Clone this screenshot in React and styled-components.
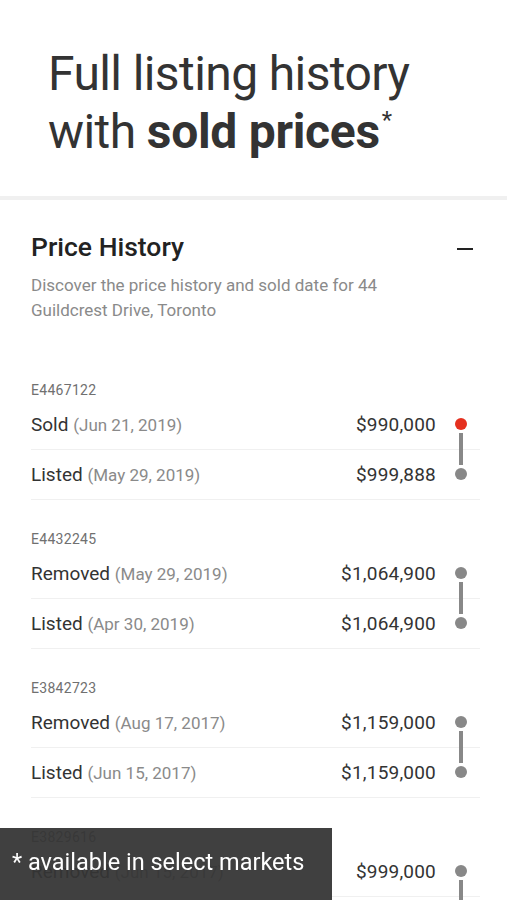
import React from "react";
import styled, { createGlobalStyle } from "styled-components";

const Global = createGlobalStyle`
  html, body { margin: 0; padding: 0; background: #fff; overflow: hidden; }
  body { font-family: Roboto, "Noto Sans", "Liberation Sans", sans-serif; color: #333; }
  * { box-sizing: border-box; }
`;

const Page = styled.div`
  width: 507px;
  height: 900px;
  overflow: hidden;
  position: relative;
`;

const Hero = styled.header`
  padding: 45px 20px 35px 48px;
  border-bottom: 4px solid #f0f0f0;
`;

const Headline = styled.h1`
  margin: 0;
  font-size: 48px;
  line-height: 58px;
  font-weight: 400;
  color: #333;
  letter-spacing: -0.6px;
  strong { font-weight: 700; letter-spacing: -0.3px; }
  sup { font-size: 24px; vertical-align: 20px; line-height: 0; margin-left: 2px; font-weight: 400; }
`;

const Section = styled.section`
  padding: 31px 27px 0 31px;
`;

const HeaderRow = styled.div`
  display: flex;
  align-items: center;
  justify-content: space-between;
`;

const Title = styled.h2`
  margin: 0;
  font-size: 26.5px;
  line-height: 32px;
  font-weight: 500;
  color: #222;
`;

const Collapse = styled.span`
  display: block;
  width: 16px;
  height: 2px;
  background: #222;
  margin-right: 7px;
  margin-top: 4px;
`;

const Description = styled.p`
  margin: 10px 0 0;
  font-size: 17px;
  line-height: 25px;
  color: #8a8a8a;
  width: 400px;
`;

const Groups = styled.div`
  margin-top: 57px;
  display: flex;
  flex-direction: column;
  gap: 29px;
`;

const GroupLabel = styled.div`
  font-size: 14px;
  line-height: 20px;
  letter-spacing: 0.3px;
  color: #707070;
`;

const Row = styled.div`
  height: 50px;
  display: flex;
  align-items: center;
  border-bottom: 1px solid #f0f0f0;
`;

const Event = styled.div`
  flex: 1;
  font-size: 19px;
  color: #333;
  span { font-size: 17px; color: #8a8a8a; }
`;

const Price = styled.div`
  font-size: 19px;
  letter-spacing: 0.2px;
  color: #333;
  text-align: right;
`;

const DotCell = styled.div`
  width: 44px;
  flex: none;
  display: flex;
  padding-left: 19px;
  margin-top: -2px;
`;

const Dot = styled.span`
  position: relative;
  width: 12px;
  height: 12px;
  border-radius: 50%;
  background: ${p => (p.$red ? "#e5301f" : "#888")};
  &::after {
    content: "";
    display: ${p => (p.$link ? "block" : "none")};
    position: absolute;
    left: 4px;
    top: 15px;
    width: 4px;
    height: 32px;
    background: #888;
  }
`;

const Toast = styled.div`
  position: fixed;
  left: 0;
  bottom: 0;
  width: 332px;
  height: 72px;
  background: rgba(52, 52, 52, 0.94);
  color: #fff;
  font-size: 23.5px;
  display: flex;
  align-items: center;
  padding: 0 0 4px 12px;
`;

const data = [
  {
    id: "E4467122",
    rows: [
      { ev: "Sold", date: "Jun 21, 2019", price: "$990,000", red: true },
      { ev: "Listed", date: "May 29, 2019", price: "$999,888" },
    ],
  },
  {
    id: "E4432245",
    rows: [
      { ev: "Removed", date: "May 29, 2019", price: "$1,064,900" },
      { ev: "Listed", date: "Apr 30, 2019", price: "$1,064,900" },
    ],
  },
  {
    id: "E3842723",
    rows: [
      { ev: "Removed", date: "Aug 17, 2017", price: "$1,159,000" },
      { ev: "Listed", date: "Jun 15, 2017", price: "$1,159,000" },
    ],
  },
  {
    id: "E3829616",
    rows: [
      { ev: "Removed", date: "Jun 15, 2017", price: "$999,000" },
      { ev: "Listed", date: "May 30, 2017", price: "$999,000" },
    ],
  },
];

export default function App() {
  return (
    <Page>
      <Global />
      <Hero>
        <Headline>
          Full listing history
          <br />
          with <strong>sold prices</strong>
          <sup>*</sup>
        </Headline>
      </Hero>
      <Section>
        <HeaderRow>
          <Title>Price History</Title>
          <Collapse />
        </HeaderRow>
        <Description>
          Discover the price history and sold date for 44 Guildcrest Drive, Toronto
        </Description>
        <Groups>
          {data.map(g => (
            <div key={g.id}>
              <GroupLabel>{g.id}</GroupLabel>
              {g.rows.map((r, i) => (
                <Row key={i}>
                  <Event>
                    {r.ev} <span>({r.date})</span>
                  </Event>
                  <Price>{r.price}</Price>
                  <DotCell>
                    <Dot $red={r.red} $link={i === 0} />
                  </DotCell>
                </Row>
              ))}
            </div>
          ))}
        </Groups>
      </Section>
      <Toast>* available in select markets</Toast>
    </Page>
  );
}
